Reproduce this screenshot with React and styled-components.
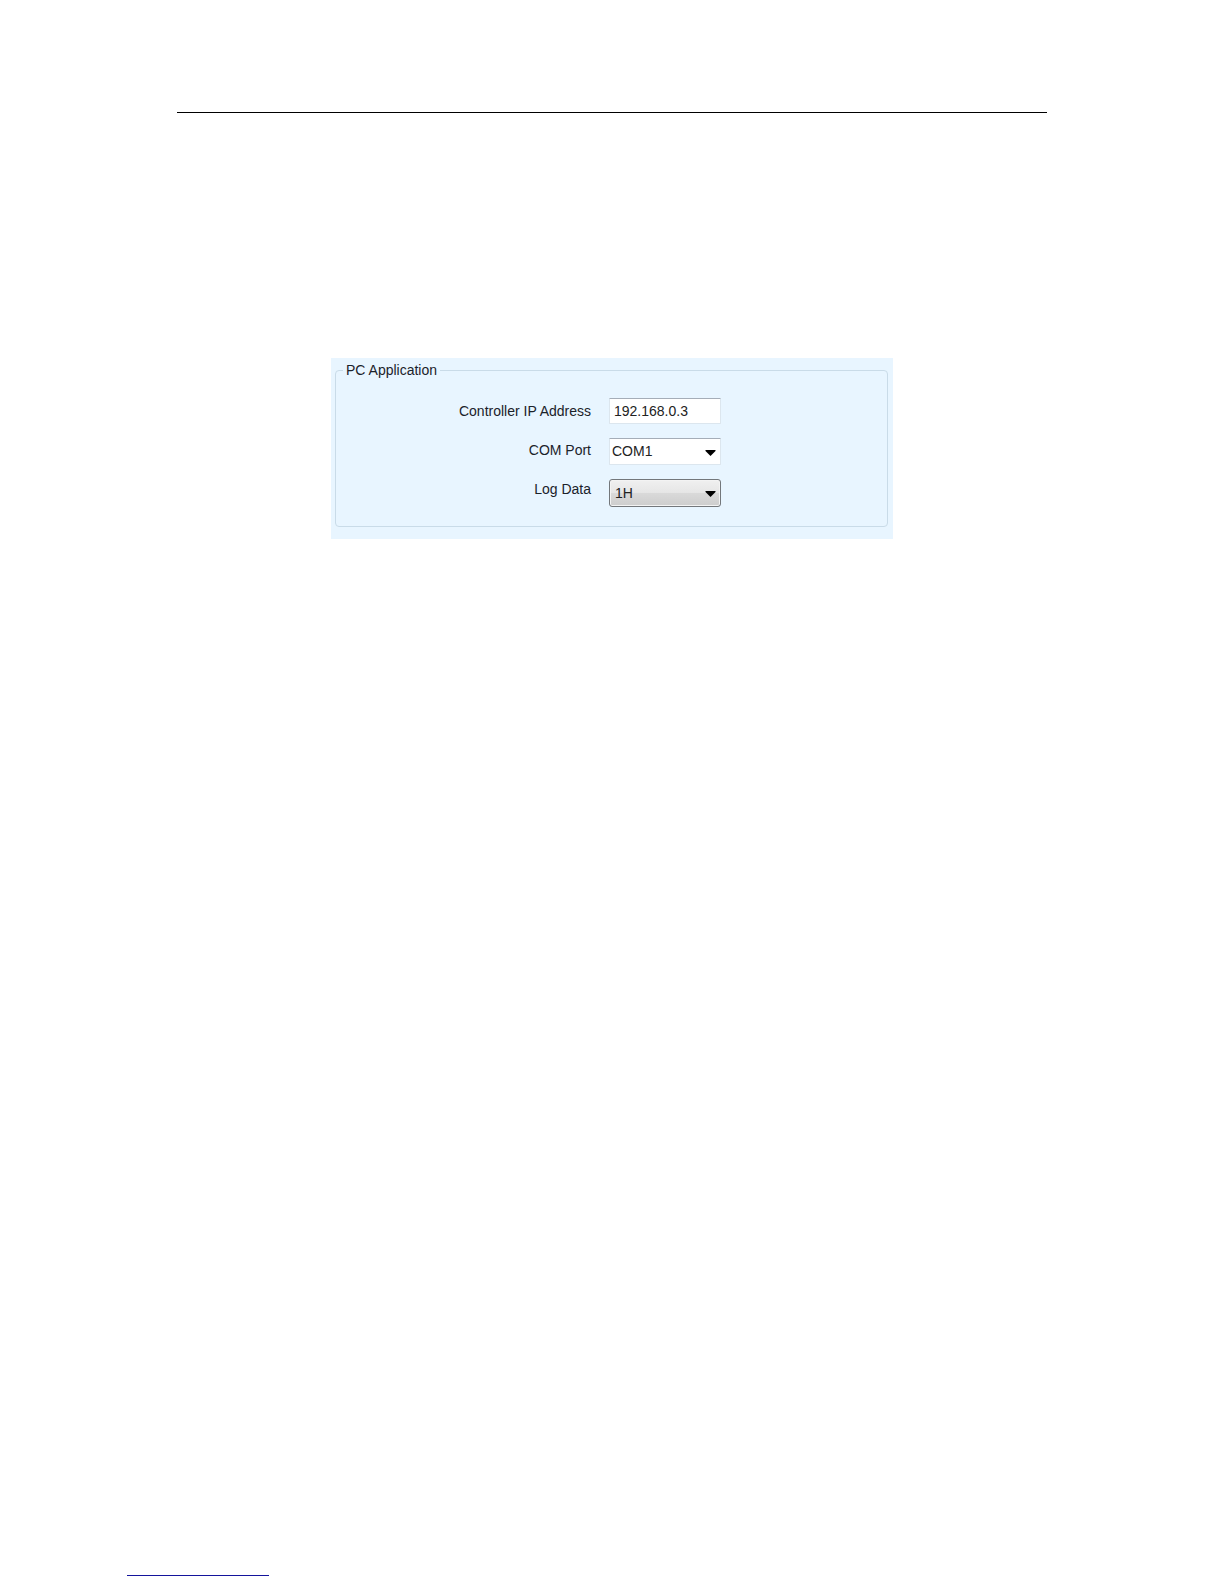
import { useState } from "react";
import styled, { createGlobalStyle, css } from "styled-components";

const GlobalStyle = createGlobalStyle`
  * {
    box-sizing: border-box;
  }

  body {
    margin: 0;
    background: #fff;
    color: #1b222a;
    font-family: "Liberation Sans", Arial, sans-serif;
    font-size: 14px;
  }
`;

const Page = styled.div`
  display: flex;
  flex-direction: column;
  min-height: 100vh;
  padding: 112px 127px 8px;
`;

const HeaderRule = styled.hr`
  align-self: stretch;
  height: 1px;
  margin: 0 50px;
  border: none;
  background: #000;
`;

const FooterRule = styled.hr`
  width: 142px;
  height: 1px;
  margin: auto 0 0;
  border: none;
  background: #14149c;
`;

const Panel = styled.form`
  width: 100%;
  max-width: 562px;
  margin: 245px auto 40px;
  padding: 4px 5px 12px 4px;
  background: #e8f5ff;
`;

const Group = styled.fieldset`
  display: block;
  min-width: 0;
  margin: 0;
  padding: 14px 0 17px;
  border: 1px solid #c9dbe8;
  border-radius: 4px;
`;

const GroupTitle = styled.legend`
  margin-left: 7px;
  padding: 0 3px;
  line-height: 16px;
`;

const Columns = styled.div`
  display: grid;
  grid-template-columns: 1fr 112px;
  column-gap: 18px;
  padding-right: 166px;
`;

const Labels = styled.div`
  display: flex;
  flex-direction: column;
  text-align: right;
`;

const Label = styled.label`
  line-height: 39px;
`;

const Controls = styled.div`
  display: flex;
  flex-direction: column;
  gap: 14px;
  padding-top: 6px;
`;

const controlStyle = css`
  display: block;
  width: 100%;
  margin: 0;
  border: 1px solid #dce6ee;
  border-top-color: #a5adb8;
  border-radius: 1px;
  background: #fff;
  color: #222;
  font: inherit;
  outline: none;
`;

const TextInput = styled.input`
  ${controlStyle}
  height: 26px;
  padding: 0 4px;
`;

const SelectBox = styled.div`
  position: relative;
`;

const Select = styled.select`
  ${controlStyle}
  appearance: none;
  height: 27px;
  padding: 0 20px 1px 2px;

  ${({ $raised }) =>
    $raised &&
    css`
      height: 28px;
      padding: 0 20px 0 5px;
      border-color: #73777b;
      border-radius: 3px;
      background: linear-gradient(#f0f0f0, #e6e6e6 48%, #d9d9d9 52%, #cdcdcd);
      box-shadow: inset 0 0 0 1px #f3f3f3;
    `}
`;

const Arrow = styled.svg`
  position: absolute;
  top: 50%;
  right: 5px;
  width: 11px;
  height: 6px;
  margin-top: -2px;
  pointer-events: none;
`;

function Dropdown({ options, ...props }) {
  return (
    <SelectBox>
      <Select {...props}>
        {options.map((option) => (
          <option key={option}>{option}</option>
        ))}
      </Select>
      <Arrow viewBox="0 0 11 6" aria-hidden="true">
        <path d="M0.5 0H10.5V1L5.5 6L0.5 1Z" fill="#000" />
      </Arrow>
    </SelectBox>
  );
}

export default function App() {
  const [address, setAddress] = useState("192.168.0.3");
  const [port, setPort] = useState("COM1");
  const [logInterval, setLogInterval] = useState("1H");

  return (
    <>
      <GlobalStyle />
      <Page>
        <HeaderRule />
        <Panel>
          <Group>
            <GroupTitle>PC Application</GroupTitle>
            <Columns>
              <Labels>
                <Label htmlFor="address">Controller IP Address</Label>
                <Label htmlFor="port">COM Port</Label>
                <Label htmlFor="log-interval">Log Data</Label>
              </Labels>
              <Controls>
                <TextInput
                  id="address"
                  type="text"
                  value={address}
                  onChange={(e) => setAddress(e.target.value)}
                />
                <Dropdown
                  id="port"
                  options={["COM1"]}
                  value={port}
                  onChange={(e) => setPort(e.target.value)}
                />
                <Dropdown
                  $raised
                  id="log-interval"
                  options={["1H"]}
                  value={logInterval}
                  onChange={(e) => setLogInterval(e.target.value)}
                />
              </Controls>
            </Columns>
          </Group>
        </Panel>
        <FooterRule />
      </Page>
    </>
  );
}
